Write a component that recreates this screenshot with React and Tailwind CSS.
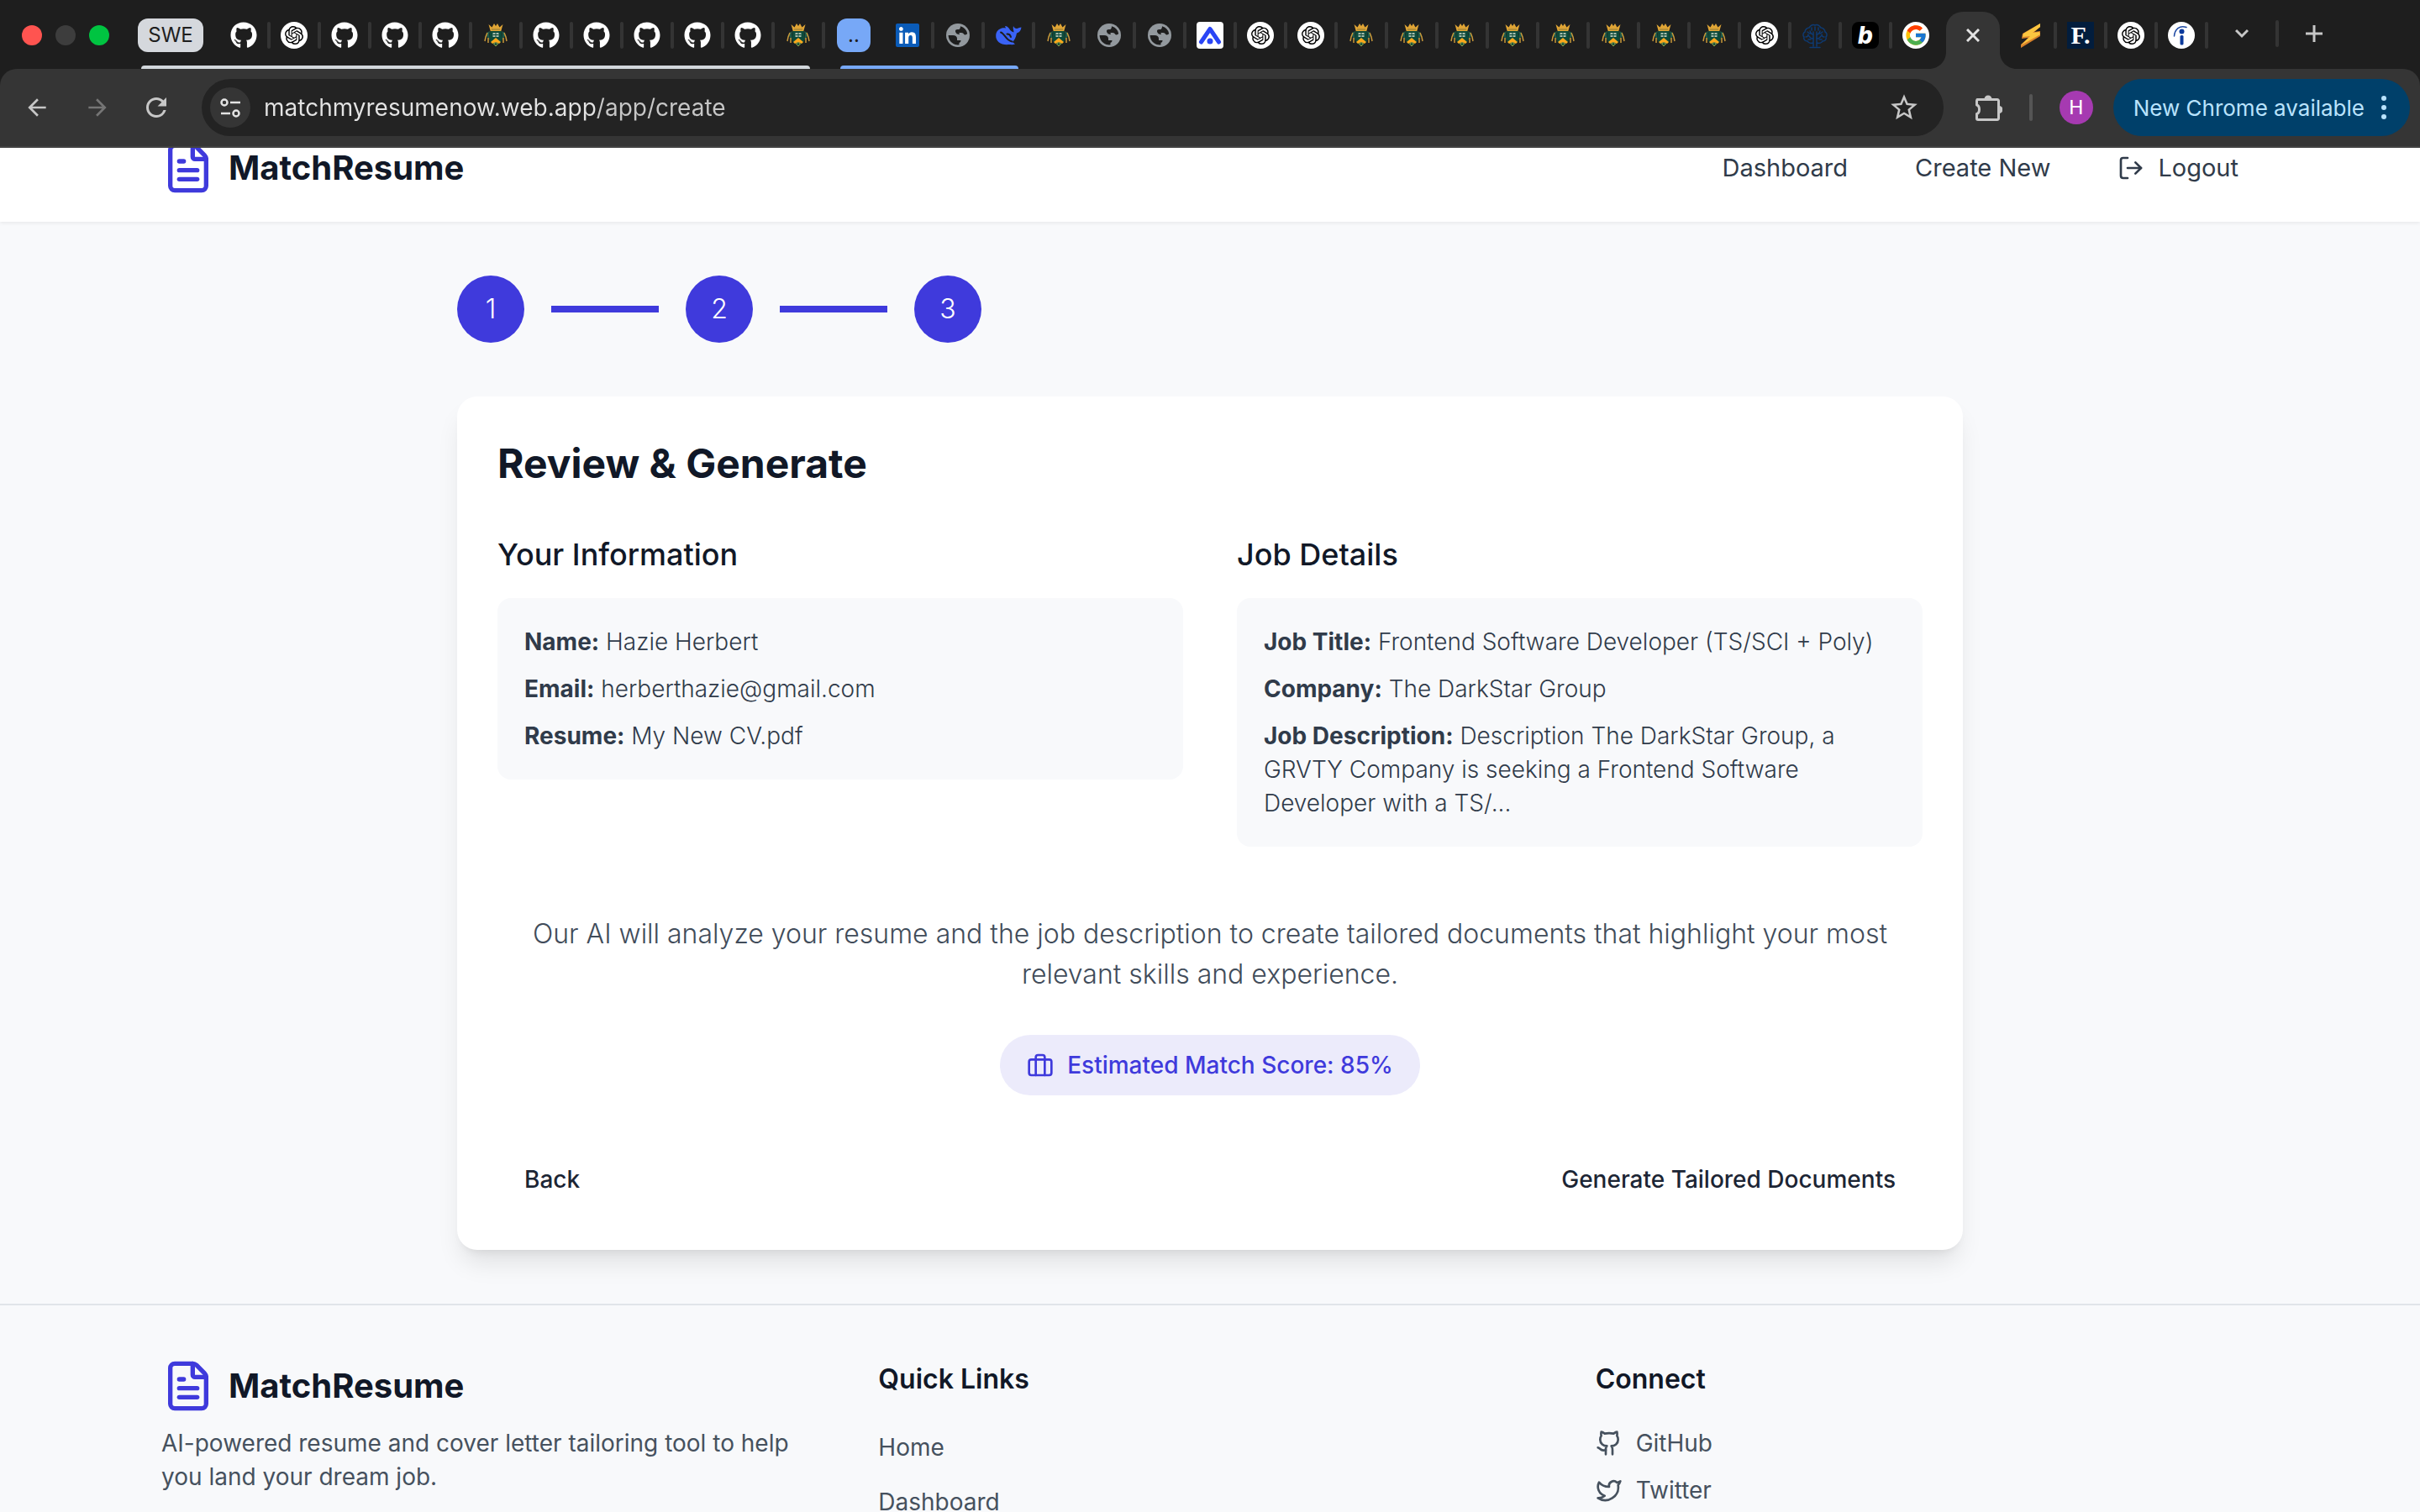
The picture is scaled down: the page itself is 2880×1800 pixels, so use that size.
import { FaGithub, FaLinkedin } from 'react-icons/fa';
import { FcGoogle } from 'react-icons/fc';
import { SiOpenai } from 'react-icons/si';
import { MdArrowBack, MdArrowForward, MdRefresh, MdStarBorder } from 'react-icons/md';
import { FileText, Github, LogOut, Twitter } from 'lucide-react';

function OpenAiIcon() {
  return (
    <span className="flex size-8 items-center justify-center rounded-full bg-white">
      <SiOpenai className="size-[22px] text-black" />
    </span>
  );
}

function CrestIcon() {
  return (
    <svg viewBox="0 0 32 32" className="size-8" aria-hidden="true">
      <path d="M7.500 3l4 3.500L14 2l2 3 2-3 2.500 4.500 4-3.500-2.500 9H10z" fill="#e0a535" />
      <path d="M11 9h10" stroke="#8d7a3c" fill="none" />
      <path d="M5 13l4-2-1 4 1 7-4-5zM27 13l-4-2 1 4-1 7 4-5z" fill="#1d5a4a" />
      <path d="M9.500 11h13l1 5-1 8-6.500 5-6.500-5-1-8z" fill="#0d4a3a" />
      <path d="M12.500 13h7v5h-7z" fill="#a9bfae" />
      <path d="M16 13v5M12.500 15.500h7" stroke="#0d4a3a" />
      <path d="M16 19l6 5-2 2-4-2-4 2-2-2z" fill="#fba81c" />
      <path d="M13.500 26l2.500-1.500 2.500 1.500-2.500 3z" fill="#0d4a3a" stroke="#97a34a" strokeWidth="1" />
      <path d="M6 13l-2 5-1 5M26 13l2 5 1 5M7 19v6M25 19v6" stroke="#c9993a" strokeWidth="1.500" fill="none" />
    </svg>
  );
}

function GlobeIcon() {
  return (
    <svg viewBox="0 0 32 32" className="size-8" aria-hidden="true">
      <circle cx="16" cy="16" r="14" fill="#93999e" />
      <path d="M4.600 16H10c3 0 5 1.300 5 3.800V22h4.500c0 1.500-.6 2.600-2 3v2.300A11.400 11.400 0 0 1 4.600 16z" fill="#1e1e1e" />
      <path d="M19 5.200A11.400 11.400 0 0 1 27.200 14c-1 1.600-3.400 2-4.200.6-.8-1.500-2-1.600-4.500-1.600-3 0-5.500-.4-5.500-2.400C13 9 15 9.200 17 9c1.300-.2 2-1.800 2-3.800z" fill="#1e1e1e" />
      <path d="M13 10.500c0 3 2 4.500 5 4.500l-1-3z" fill="#1e1e1e" />
    </svg>
  );
}

function WhaleIcon() {
  return (
    <svg viewBox="0 0 32 32" className="size-8" aria-hidden="true">
      <path d="M17 8c1 2 3 4 5.500 4.500 0-2-1.500-5-.5-7.500.8 2 2 3 4 3 1.500 0 3-1.500 5.500-1.500-.5 3.500-2 6-5.500 7-1 5-2.500 8-5 10.500l3 2.500c-2.500 1-5 .5-7 .5C8 28 .5 24 1.200 15.500 2 9 8 6.500 13 7.500L12 5c2.500 0 4 1.500 5 3z" fill="#3a63f6" />
      <path d="M7 12.500c5 1.500 6 10 13.500 11" fill="none" stroke="#1e1e1e" strokeWidth="2" strokeLinecap="round" />
      <path d="M14.500 14.500c2.500-.2 4 1.500 4.500 3.500" fill="none" stroke="#1e1e1e" strokeWidth="2" strokeLinecap="round" />
    </svg>
  );
}

function PeakIcon() {
  return (
    <svg viewBox="0 0 32 32" className="size-8" aria-hidden="true">
      <rect width="32" height="32" rx="4" fill="#fff" />
      <path d="M5.500 24L16 8.500 26.500 24" fill="none" stroke="#2a45f5" strokeWidth="5" strokeLinecap="round" strokeLinejoin="round" />
      <circle cx="16" cy="23" r="3.500" fill="#2a45f5" />
    </svg>
  );
}

function TreeIcon() {
  return (
    <svg viewBox="0 0 32 32" className="size-8" fill="none" stroke="#0e3a72" strokeWidth="1.500" strokeLinecap="round" aria-hidden="true">
      <path d="M14 29V12M18 29V12M10 30.500h12M14 25c-3 1-6 0-7-2-3 0-5-2-4-5-2-2-1-5 1-6 0-3 3-5 5-5 2-3 5-4 7-3 2-1 5 0 7 3 2 0 5 2 5 5 2 1 3 4 1 6 1 3-1 5-4 5-1 2-4 3-7 2" />
      <path d="M14 20c-3 0-4-1-5-3M18 20c3 0 4-1 5-3M14 15c-3 0-3-2-4-4M18 15c3 0 3-2 4-4M16 10V6M5 18c2 0 3-1 3-3M27 18c-2 0-3-1-3-3M12 10V7M20 10V7M7 12l3 2M25 12l-3 2M8 21h3M24 21h-3" />
    </svg>
  );
}

function BoltIcon() {
  return (
    <svg viewBox="0 0 32 32" className="size-8" aria-hidden="true">
      <path d="M28 2L7 14l-1 6 8-1-9 8v4l23-14v-6l-7 1 7-6z" fill="#d9822b" />
      <path d="M28 2L8 14l-1 4 9-1L5 28l23-13-1-3-8 1 9-7z" fill="#fbc640" />
    </svg>
  );
}

function IndeedIcon() {
  return (
    <svg viewBox="0 0 32 32" className="size-8" aria-hidden="true">
      <circle cx="16" cy="16" r="16" fill="#fff" />
      <path d="M7.500 17C8 9 14 3.500 22 6.500" fill="none" stroke="#1f4aa3" strokeWidth="1.500" strokeLinecap="round" />
      <circle cx="16.500" cy="11.500" r="3" fill="#0c3a9c" />
      <rect x="14.500" y="16" width="4" height="11.500" rx="1.500" fill="#0c3a9c" />
    </svg>
  );
}

const favicons = {
  github: <FaGithub className="size-8 text-white" />,
  openai: <OpenAiIcon />,
  crest: <CrestIcon />,
  linkedin: (
    <span className="flex size-8 items-center justify-center bg-[linear-gradient(#fff,#fff)] bg-[length:22px_22px] bg-center bg-no-repeat">
      <FaLinkedin className="size-8 text-[#0a5bb8]" />
    </span>
  ),
  globe: <GlobeIcon />,
  whale: <WhaleIcon />,
  peak: <PeakIcon />,
  tree: <TreeIcon />,
  bold: (
    <span className="flex size-8 items-center justify-center rounded-lg bg-black text-[28px] leading-8 font-extrabold italic text-white">b</span>
  ),
  google: (
    <span className="flex size-8 items-center justify-center rounded-full bg-white">
      <FcGoogle className="size-7" />
    </span>
  ),
  bolt: <BoltIcon />,
  forage: (
    <span className="flex size-8 items-center justify-center bg-[#021d3d] font-['Liberation_Serif',serif] text-[30px] leading-8 font-bold text-white">F.</span>
  ),
  indeed: <IndeedIcon />,
};

const groupOne = ['github', 'openai', 'github', 'github', 'github', 'crest', 'github', 'github', 'github', 'github', 'github', 'crest'];
const groupTwo = ['linkedin', 'globe', 'whale'];
const looseTabs = [
  'crest', 'globe', 'globe', 'peak', 'openai', 'openai', 'crest', 'crest', 'crest', 'crest',
  'crest', 'crest', 'crest', 'crest', 'openai', 'tree', 'bold', 'google',
];
const tabsAfter = ['bolt', 'forage', 'openai', 'indeed'];

function Tab({ name }) {
  const divider = name === 'google' ? 'bg-transparent' : 'bg-[#343434]';
  return (
    <button type="button" aria-label={name} className="flex shrink-0 items-center gap-3 pl-3">
      {favicons[name]}
      <span className={`h-8 w-1 rounded-full ${divider}`} />
    </button>
  );
}

function TabStrip() {
  return (
    <div className="flex h-[82px] items-center pt-0.5 pl-[26px]">
      <div className="flex shrink-0 gap-4">
        <span className="size-6 rounded-full bg-[#ff5450]" />
        <span className="size-6 rounded-full bg-[#3d3d3d]" />
        <span className="size-6 rounded-full bg-[#00c441]" />
      </div>
      <div className="relative ml-[34px] flex h-full shrink-0 items-center">
        <button type="button" className="mr-5 h-10 w-[78px] rounded-xl bg-[#d5d8dd] text-2xl leading-10 text-[#1e1e1e]">SWE</button>
        {groupOne.map((name, i) => <Tab key={i} name={name} />)}
        <span className="absolute right-[18px] bottom-0 left-1 h-1 rounded-t bg-[#d2d7dc]" />
      </div>
      <div className="relative ml-3.5 flex h-full shrink-0 items-center">
        <button type="button" className="mr-4 h-10 w-10 rounded-xl bg-[#77a8f7] text-2xl leading-10 text-[#1e1e1e]">..</button>
        {groupTwo.map((name) => <Tab key={name} name={name} />)}
        <span className="absolute right-5 bottom-0 left-1 h-1 rounded-t bg-[#77a8f7]" />
      </div>
      {looseTabs.map((name, i) => <Tab key={i} name={name} />)}
      <div className="relative mr-2 ml-1 flex h-[68px] w-16 shrink-0 items-center justify-center self-end rounded-t-[20px] bg-[#353535] pb-3">
        <svg viewBox="0 0 20 20" className="absolute bottom-0 -left-5 size-5" aria-hidden="true">
          <path d="M20 0v20H0C11 20 20 11 20 0z" fill="#353535" />
        </svg>
        <svg viewBox="0 0 20 20" className="absolute -right-5 bottom-0 size-5" aria-hidden="true">
          <path d="M0 0v20h20C9 20 0 11 0 0z" fill="#353535" />
        </svg>
        <button type="button" aria-label="Close tab">
          <svg viewBox="0 0 16 16" className="size-4" stroke="#e3e3e3" strokeWidth="3" aria-hidden="true">
            <path d="M1 1l14 14M15 1L1 15" />
          </svg>
        </button>
      </div>
      {tabsAfter.map((name) => <Tab key={name} name={name} />)}
      <div className="flex items-center pb-1">
        <button type="button" aria-label="Search tabs" className="ml-8">
          <svg viewBox="0 0 16 12" className="h-3 w-4" fill="none" stroke="#c7c7c7" strokeWidth="3" aria-hidden="true">
            <path d="M1 2l7 7 7-7" />
          </svg>
        </button>
        <span className="mx-8 h-8 w-1 rounded-full bg-[#343434]" />
        <button type="button" aria-label="New tab">
          <svg viewBox="0 0 20 20" className="size-5" stroke="#c7c7c7" strokeWidth="3" aria-hidden="true">
            <path d="M10 0v20M0 10h20" />
          </svg>
        </button>
      </div>
    </div>
  );
}

function Toolbar() {
  return (
    <div className="flex h-[94px] items-center rounded-t-[20px] border-b-2 border-[#424242] bg-[#353535] pr-3 pl-7 text-[#c7c7c7]">
      <button type="button" aria-label="Back"><MdArrowBack className="size-8" /></button>
      <button type="button" aria-label="Forward" className="ml-10 text-[#757575]"><MdArrowForward className="size-8" /></button>
      <button type="button" aria-label="Reload" className="ml-9">
        <MdRefresh className="size-9" />
      </button>
      <div className="ml-9 flex h-[68px] flex-1 items-center rounded-full bg-[#232323] pr-7 pl-2.5">
        <button type="button" aria-label="Site information" className="flex size-12 items-center justify-center rounded-full bg-[#353535]">
          <svg viewBox="0 0 26 26" className="size-[26px]" fill="none" stroke="#e3e3e3" strokeWidth="2.500" aria-hidden="true">
            <circle cx="6" cy="7" r="3.500" />
            <path d="M13 7h12M2 20h11" />
            <circle cx="20" cy="20" r="3.500" />
          </svg>
        </button>
        <input
          type="text"
          aria-label="Address"
          defaultValue="matchmyresumenow.web.app/app/create"
          className="ml-4 flex-1 bg-[linear-gradient(90deg,#e3e3e3_394px,#c7c7c7_394px)] bg-clip-text text-[28px] leading-10 text-transparent outline-none"
        />
        <button type="button" aria-label="Bookmark"><MdStarBorder className="size-[38px]" /></button>
      </div>
      <button type="button" aria-label="Extensions" className="ml-9">
        <svg viewBox="0 0 34 34" className="size-[34px]" aria-hidden="true">
          <path d="M4 7.500h24a1.500 1.500 0 0 1 1.500 1.500v21a1.500 1.500 0 0 1-1.500 1.500H5A1.500 1.500 0 0 1 3.500 30v-5.500c4-1 4-9.500 0-10.500V9z" fill="none" stroke="#c7c7c7" strokeWidth="3" strokeLinejoin="round" />
          <path d="M12.500 7a4.500 4.500 0 0 1 9 0zM30 15a4.500 4.500 0 0 1 0 9z" fill="#c7c7c7" />
        </svg>
      </button>
      <span className="mx-8 h-8 w-1 rounded-full bg-[#555555]" />
      <button type="button" aria-label="Profile" className="size-10 rounded-full bg-[#a63ab1] font-[Roboto,sans-serif] text-2xl leading-10 text-white">H</button>
      <button type="button" className="ml-6 flex h-[68px] items-center gap-5 rounded-full bg-[#00406a] pr-7 pl-6 text-[26px] text-[#b9e3fd]">
        New Chrome available
        <svg viewBox="0 0 6 30" className="h-[30px] w-1.5" fill="currentColor" aria-hidden="true">
          <circle cx="3" cy="4" r="3" />
          <circle cx="3" cy="15" r="3" />
          <circle cx="3" cy="26" r="3" />
        </svg>
      </button>
    </div>
  );
}

function Logo() {
  return (
    <a href="#home" className="flex items-center gap-4">
      <FileText className="size-16 text-[#3f3adc]" />
      <span className="text-[40px] leading-[56px] font-bold text-[#111827]">MatchResume</span>
    </a>
  );
}

function Header() {
  return (
    <header className="-mt-10 bg-white shadow-[0_2px_4px_rgb(0_0_0/0.06)]">
      <div className="mx-auto flex h-32 max-w-[2560px] items-center justify-between px-8">
        <Logo />
        <nav className="flex items-center gap-8 text-[29px] leading-10 text-[#303b4a]">
          <a href="#dashboard" className="px-6">Dashboard</a>
          <a href="#create" className="px-6">Create New</a>
          <button type="button" className="flex items-center gap-4 px-6">
            <LogOut className="size-8" />
            Logout
          </button>
        </nav>
      </div>
    </header>
  );
}

function Steps() {
  return (
    <ol className="flex items-center gap-8">
      {[1, 2, 3].map((step) => (
        <li key={step} className="flex items-center gap-8">
          {step > 1 && <span className="h-2 w-32 bg-[#3f3adc]" />}
          <span className="flex size-20 items-center justify-center rounded-full bg-[#3f3adc] text-[32px] leading-[48px] font-light text-white">{step}</span>
        </li>
      ))}
    </ol>
  );
}

function InfoPanel({ title, rows }) {
  return (
    <section>
      <h3 className="mb-6 text-4xl leading-[56px] font-medium text-[#111827]">{title}</h3>
      <div className="space-y-4 rounded-2xl bg-[#f8f9fb] p-8 text-[28px] leading-10 font-[350] text-[#303b4a]">
        {rows.map(([label, value]) => (
          <p key={label}><strong className="font-bold">{label}:</strong> {value}</p>
        ))}
      </div>
    </section>
  );
}

function BriefcaseIcon() {
  return (
    <svg viewBox="0 0 24 24" className="size-8" fill="none" stroke="currentColor" strokeWidth="2" strokeLinecap="round" strokeLinejoin="round" aria-hidden="true">
      <rect x="2" y="7" width="20" height="14" rx="2" />
      <path d="M16 21V5a2 2 0 0 0-2-2h-4a2 2 0 0 0-2 2v16" />
    </svg>
  );
}

function ReviewCard() {
  return (
    <section className="mt-16 rounded-3xl bg-white p-12 shadow-[0_20px_30px_-6px_rgb(0_0_0/0.1),0_8px_12px_-8px_rgb(0_0_0/0.1)]">
      <h2 className="mb-12 text-5xl leading-16 font-bold text-[#111827]">Review &amp; Generate</h2>
      <div className="grid grid-cols-2 items-start gap-16">
        <InfoPanel
          title="Your Information"
          rows={[
            ['Name', 'Hazie Herbert'],
            ['Email', 'herberthazie@gmail.com'],
            ['Resume', 'My New CV.pdf'],
          ]}
        />
        <InfoPanel
          title="Job Details"
          rows={[
            ['Job Title', 'Frontend Software Developer (TS/SCI + Poly)'],
            ['Company', 'The DarkStar Group'],
            ['Job Description', 'Description The DarkStar Group, a GRVTY Company is seeking a Frontend Software Developer with a TS/...'],
          ]}
        />
      </div>
      <div className="mt-20 text-center">
        <p className="text-[32px] leading-[48px] font-[350] text-[#414c5a]">
          Our AI will analyze your resume and the job description to create tailored documents that highlight your most relevant skills and experience.
        </p>
        <div className="mt-12 inline-flex items-center gap-4 rounded-full bg-[#ecebfb] px-8 py-4 text-[28px] leading-10 font-medium text-[#3f3adc]">
          <BriefcaseIcon />
          Estimated Match Score: 85%
        </div>
      </div>
      <div className="mt-16 flex justify-between text-[28px] leading-10 font-medium text-[#1c2534]">
        <button type="button" className="px-8 py-4">Back</button>
        <button type="button" className="px-8 py-4">Generate Tailored Documents</button>
      </div>
    </section>
  );
}

function Footer() {
  return (
    <footer className="mt-16 border-t-2 border-[#e1e4e9]">
      <div className="mx-auto grid max-w-[2560px] grid-cols-3 gap-16 px-8 pt-16 text-[28px] leading-10 text-[#46515e]">
        <div className="space-y-4">
          <Logo />
          <p>AI-powered resume and cover letter tailoring tool to help you land your dream job.</p>
        </div>
        <div>
          <h4 className="mb-8 text-[32px] leading-[48px] font-semibold text-[#111827]">Quick Links</h4>
          <ul className="space-y-4 text-[32px] leading-[48px]">
            <li><a href="#home" className="text-[28px]">Home</a></li>
            <li><a href="#dashboard" className="text-[28px]">Dashboard</a></li>
          </ul>
        </div>
        <div>
          <h4 className="mb-8 text-[32px] leading-[48px] font-semibold text-[#111827]">Connect</h4>
          <ul className="space-y-4">
            <li><a href="#github" className="flex items-center gap-4"><Github className="size-8" />GitHub</a></li>
            <li><a href="#twitter" className="flex items-center gap-4"><Twitter className="size-8" />Twitter</a></li>
          </ul>
        </div>
      </div>
    </footer>
  );
}

export default function App() {
  return (
    <div className="flex h-screen flex-col overflow-hidden bg-[#f8f9fb] font-[Inter,sans-serif]">
      <div className="shrink-0 bg-[#1e1e1e]">
        <TabStrip />
        <Toolbar />
      </div>
      <div className="min-h-0 flex-1 overflow-hidden">
        <div className="flow-root">
          <Header />
          <main className="mx-auto max-w-[1792px] pt-16">
            <Steps />
            <ReviewCard />
          </main>
          <Footer />
        </div>
      </div>
    </div>
  );
}
